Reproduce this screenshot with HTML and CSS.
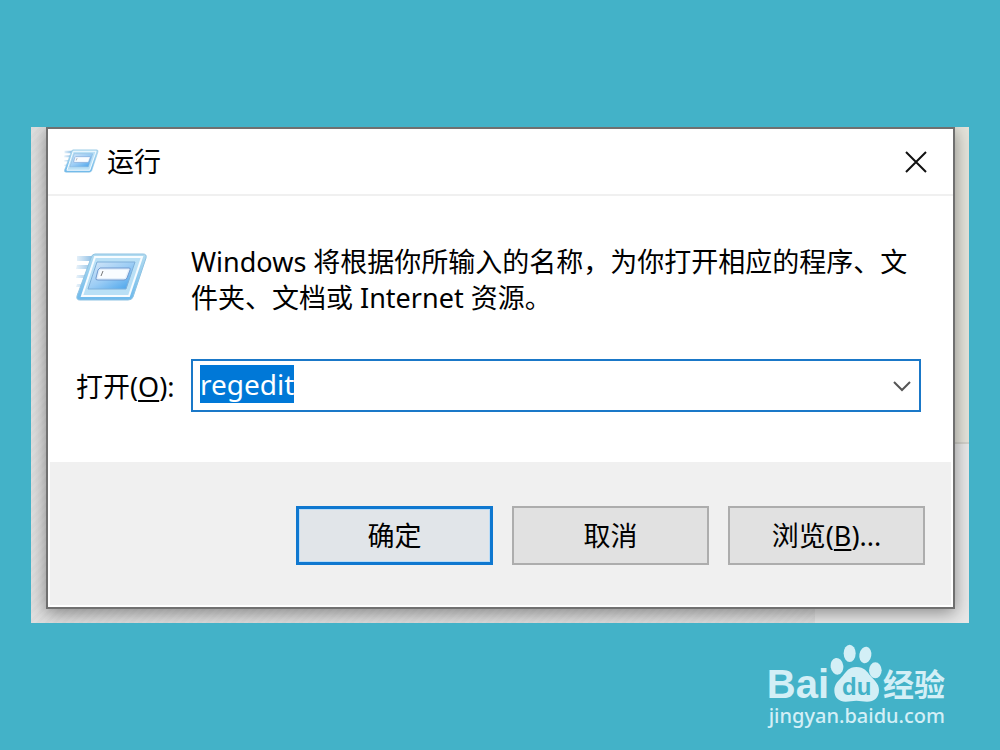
FILE: index.html
```html
<!DOCTYPE html>
<html lang="zh-CN">

<head>
    <meta charset="UTF-8">
    <title>运行</title>
    <link rel="stylesheet" href="styles.css">
</head>

<body>
    <svg class="defs" aria-hidden="true">
        <defs>
            <linearGradient id="frame" x1="0" y1="0" x2="0" y2="1">
                <stop offset="0" stop-color="#b3dcf0" />
                <stop offset="1" stop-color="#6db9ec" />
            </linearGradient>
            <linearGradient id="panel" x1="0" y1="0" x2="1" y2="1">
                <stop offset="0" stop-color="#d8e8f8" />
                <stop offset="0.5" stop-color="#9ccdf5" />
                <stop offset="1" stop-color="#3f9fea" />
            </linearGradient>
            <linearGradient id="trail" x1="0" y1="0" x2="1" y2="0">
                <stop offset="0" stop-color="#8fc0e6" stop-opacity="0.2" />
                <stop offset="1" stop-color="#7db4e0" />
            </linearGradient>
        </defs>
        <symbol id="run-icon" viewBox="0 0 72 50">
            <path d="M1 3h18l-2 5H1zM1 12h14l-1 4H0zM1 22h11l-1 3H0zM1 31h8l-1 3H0zM1 40h5l-1 4H1z" fill="url(#trail)" />
            <path d="M19 1h48q4 0 3 4L57 44q-1 3-5 3H4q-4 0-3-4L15 5q1-4 4-4z" fill="url(#frame)" stroke="#8fc3e3" />
            <path d="M19 4h47L53 43H6z" fill="#b9e0f6" stroke="#f7fcff" stroke-width="2" />
            <path d="M21 9h38L50 36H12z" fill="url(#panel)" stroke="#7fb0da" />
            <path d="M24 15h29q2 0 1 2l-3 8q-1 2-3 2H22q-3 0-2-2l2-8z" fill="#e4effb" stroke="#7099cf" stroke-width="1" />
            <path d="M24 17h28l-3 8H22z" fill="#f9fcff" />
            <path d="M27 18l-2 5" stroke="#777" fill="none" />
        </symbol>
    </svg>

    <main class="desktop">
        <section class="dialog" aria-labelledby="title">
            <header class="titlebar">
                <svg class="icon-small" aria-hidden="true"><use href="#run-icon" /></svg>
                <h1 id="title">运行</h1>
                <button class="close" type="button" aria-label="关闭">
                    <svg viewBox="0 0 24 24" width="24" height="24">
                        <path d="M2 2l20 20M22 2L2 22" fill="none" stroke="#111" stroke-width="2" />
                    </svg>
                </button>
            </header>
            <form>
                <div class="content">
                    <svg class="icon-large" aria-hidden="true"><use href="#run-icon" /></svg>
                    <p>Windows 将根据你所输入的名称，为你打开相应的程序、文件夹、文档或 Internet 资源。</p>
                    <label for="command">打开(<u>O</u>):</label>
                    <div class="combo">
                        <input type="text" id="command" value="regedit" accesskey="o" autocomplete="off">
                        <button type="button" aria-label="显示列表">
                            <svg viewBox="0 0 18 12" width="18" height="12">
                                <path d="M1 2l8 8 8-8" fill="none" stroke="#555" stroke-width="2" />
                            </svg>
                        </button>
                    </div>
                </div>
                <div class="actions">
                    <button class="btn btn-default" type="submit">确定</button>
                    <button class="btn" type="button">取消</button>
                    <button class="btn" type="button" accesskey="b">浏览(<u>B</u>)...</button>
                </div>
            </form>
        </section>
    </main>

    <footer class="brand">
        <div class="logo">
            <span class="logo-bai">Bai</span>
            <svg class="paw" viewBox="0 0 156 180">
                <ellipse cx="21" cy="67" rx="19" ry="25" transform="rotate(-8 21 67)" />
                <ellipse cx="59" cy="28" rx="18" ry="26" />
                <ellipse cx="106" cy="33" rx="18" ry="25" transform="rotate(10 106 33)" />
                <ellipse cx="136" cy="79" rx="19" ry="24" />
                <path d="M79 69c24 0 32 14 42 26s26 23 26 43c0 23-14 35-36 35-12 0-20-3-32-3s-20 3-32 3c-22 0-34-13-34-34 0-20 14-30 25-43s18-27 41-27z" />
                <text x="80" y="153" text-anchor="middle">du</text>
            </svg>
            <span class="logo-name">经验</span>
        </div>
        <a href="#">jingyan.baidu.com</a>
    </footer>

    <script>
        const command = document.getElementById("command");
        command.focus();
        command.select();
    </script>
</body>

</html>
```
FILE: styles.css
```css
* {
    box-sizing: border-box;
}

body {
    margin: 0;
    padding: 127px 31px 0;
    background: #43b2c8;
    color: #000;
    font-family: 'Noto Sans', 'Noto Sans CJK SC', sans-serif;
    font-size: 27px;
}

button,
input {
    font: inherit;
    color: inherit;
}

.defs {
    display: block;
    width: 0;
    height: 0;
}

.desktop {
    padding: 0 14px 14px 15px;
    overflow: hidden;
    background:
        linear-gradient(#e4e3da, #e4e3da 315px, #d2d1ca 315px, #d2d1ca 317px, #e8e8e8 317px) right / 154px 100% no-repeat,
        repeating-linear-gradient(135deg, #dcdcdc 0 3px, #dfdfdf 3px 6px);
}

.dialog {
    background: #fff;
    border: 2px solid #707070;
    border-bottom-width: 2px;
    box-shadow: 0 4px 16px rgba(0, 0, 0, 0.4);
}

.titlebar {
    display: flex;
    align-items: center;
    gap: 8px;
    height: 67px;
    padding: 0 17px 0 16px;
    border-bottom: 2px solid #f0f0f0;
}

.titlebar h1 {
    flex: 1;
    margin: 0;
    font-size: 27px;
    font-weight: normal;
    line-height: 36px;
}

.icon-small {
    width: 35px;
    height: 25px;
}

.close {
    display: flex;
    padding: 8px;
    border: none;
    background: none;
}

.content {
    display: grid;
    grid-template-columns: 115px 1fr;
    row-gap: 43px;
    padding: 48px 32px 50px 28px;
}

.icon-large {
    width: 72px;
    height: 50px;
    margin-top: 9px;
}

.content p {
    margin: 0;
    line-height: 36px;
}

.content label {
    align-self: center;
}

u {
    text-decoration-thickness: 2px;
    text-underline-offset: 3px;
}

.combo {
    display: flex;
    height: 53px;
    border: 2px solid #1a78c8;
}

.combo input {
    flex: 1;
    min-width: 0;
    padding: 0 7px 3px;
    border: none;
    outline: none;
    background: none;
    caret-color: transparent;
    font-size: 28px;
}

.combo input::selection {
    background: #0078d7;
    color: #fff;
}

.combo button {
    display: flex;
    align-items: center;
    padding: 0 8px;
    border: none;
    background: none;
}

.actions {
    display: flex;
    justify-content: flex-end;
    gap: 19px;
    margin: 0 2px 2px;
    padding: 44px 26px 40px;
    background: #f0f0f0;
}

.btn {
    width: 197px;
    height: 59px;
    padding: 0 0 2px;
    border: 2px solid #adadad;
    background: #e1e1e1;
}

.btn-default {
    border: 3px solid #0f78d0;
    background: #e1e5e9;
    box-shadow: inset 0 0 0 1px #b9dcf8;
}

.brand {
    display: flex;
    flex-direction: column;
    align-items: flex-end;
    padding: 20px 24px 0 0;
    color: #d3eff6;
}

.logo {
    display: flex;
    align-items: flex-end;
    gap: 1px;
    height: 61px;
    line-height: 40px;
}

.logo-bai {
    font-family: 'Liberation Sans', sans-serif;
    font-size: 40px;
    font-weight: bold;
}

.logo-name {
    font-size: 31px;
    font-weight: bold;
}

.paw {
    width: 52px;
    height: 60px;
    fill: #d3eff6;
}

.paw text {
    fill: #43b2c8;
    font-family: 'Liberation Sans', sans-serif;
    font-size: 72px;
    font-weight: bold;
}

.brand a {
    color: inherit;
    font-size: 20px;
    font-weight: 500;
    line-height: 24px;
    text-decoration: none;
}
```
